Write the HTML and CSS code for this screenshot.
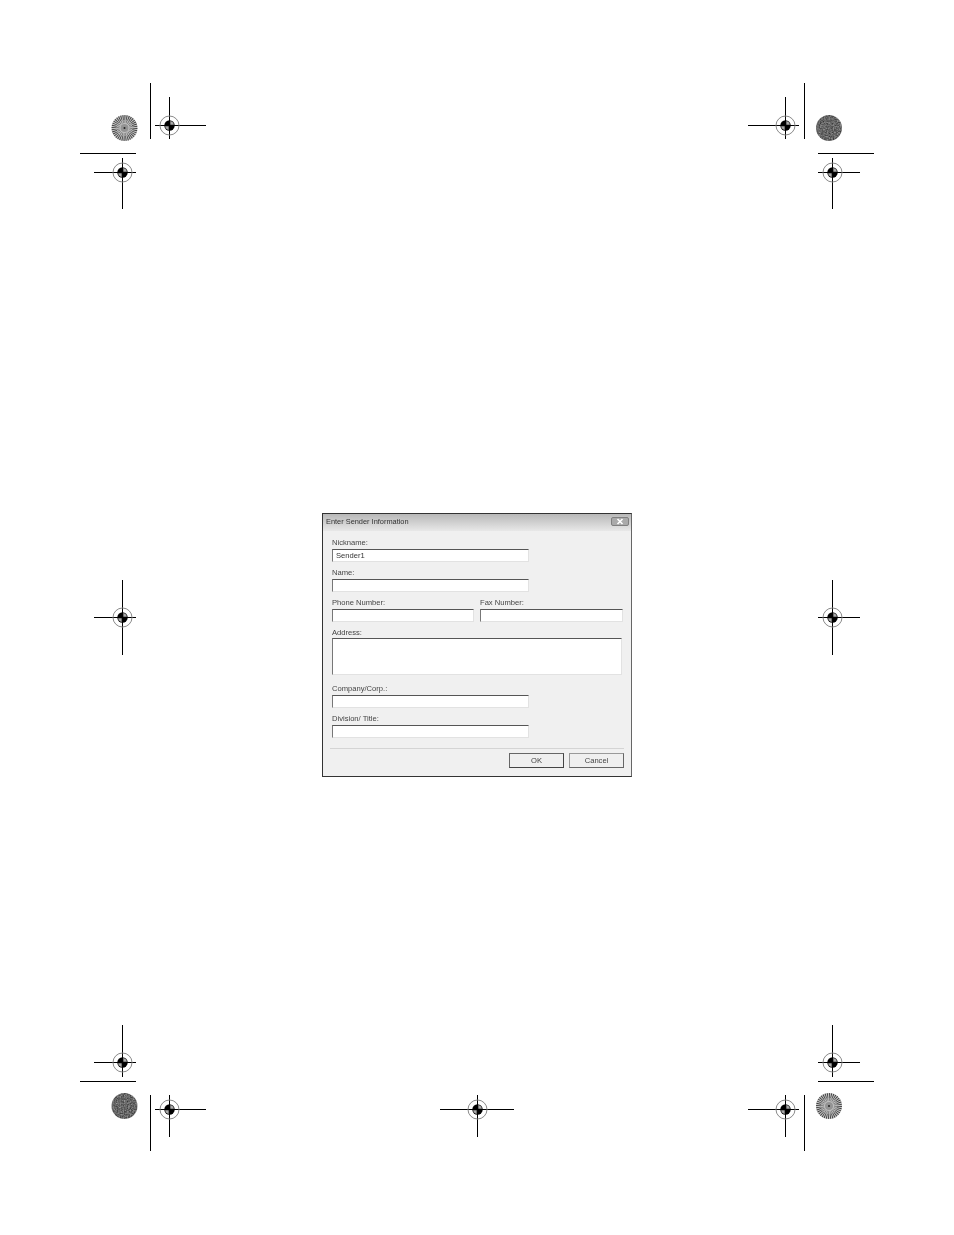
FILE: index.html
```html
<!DOCTYPE html>
<html lang="en">
<head>
    <meta charset="UTF-8">
    <title>Enter Sender Information</title>
    <link rel="stylesheet" href="styles.css">
</head>
<body>
    <!-- printer's marks around the page -->
    <svg class="marks" width="954" height="1235" viewBox="0 0 954 1235">
        <defs>
            <filter id="noise" color-interpolation-filters="sRGB">
                <feTurbulence type="fractalNoise" baseFrequency="0.7" numOctaves="2" seed="4"/>
                <feColorMatrix values="0.6 0 0 0 0.1  0.6 0 0 0 0.1  0.6 0 0 0 0.1  0 0 0 0 1"/>
                <feComposite in2="SourceAlpha" operator="in"/>
            </filter>
            <g id="reg">
                <circle r="9.5" fill="none" stroke="#8a8a8a" stroke-width="1"/>
                <circle r="5.2" fill="#000"/>
                <path d="M0.8 -0.8V-4.4A4.4 4.4 0 0 1 4.4 -0.8Z" fill="#aaa"/>
                <path d="M-0.8 0.8V4.4A4.4 4.4 0 0 1 -4.4 0.8Z" fill="#aaa"/>
            </g>
            <g id="star">
                <circle r="13" fill="#c4c4c4"/>
                <circle r="10.4" fill="none" stroke="#3a3a3a" stroke-width="5" pathLength="72" stroke-dasharray="0.9 1.1"/>
                <circle r="6.4" fill="none" stroke="#777" stroke-width="3" pathLength="48" stroke-dasharray="1 1"/>
                <circle r="4" fill="#939393"/>
                <circle r="1" fill="#222"/>
            </g>
            <circle id="grain" r="13" fill="#666" filter="url(#noise)"/>
        </defs>

        <path class="rule" d="M150.5 83V139M80 153.5H136M804.5 83V139M818 153.5H874
            M80 1081.5H136M150.5 1095V1151M818 1081.5H874M804.5 1095V1151
            M155 125.5H206M169.5 97V139M94 172.5H136M122.5 158V209
            M748 125.5H799M785.5 97V139M818 172.5H860M832.5 158V209
            M94 617.5H136M122.5 580V655M818 617.5H860M832.5 580V655
            M94 1062.5H136M122.5 1025V1077M155 1109.5H206M169.5 1095V1137
            M440 1109.5H514M477.5 1095V1137
            M818 1062.5H860M832.5 1025V1077M748 1109.5H799M785.5 1095V1137"/>

        <use href="#reg" x="169.5" y="125.5"/>
        <use href="#reg" x="122.5" y="172.5"/>
        <use href="#reg" x="785.5" y="125.5"/>
        <use href="#reg" x="832.5" y="172.5"/>
        <use href="#reg" x="122.5" y="617.5"/>
        <use href="#reg" x="832.5" y="617.5"/>
        <use href="#reg" x="122.5" y="1062.5"/>
        <use href="#reg" x="169.5" y="1109.5"/>
        <use href="#reg" x="477.5" y="1109.5"/>
        <use href="#reg" x="832.5" y="1062.5"/>
        <use href="#reg" x="785.5" y="1109.5"/>

        <use href="#star" x="124.5" y="128"/>
        <use href="#grain" x="829" y="128"/>
        <use href="#grain" x="124.5" y="1106"/>
        <use href="#star" x="829" y="1106"/>
    </svg>

    <div class="page">
        <div class="dialog">
            <div class="title-bar">
                <span class="title">Enter Sender Information</span>
                <button type="button" class="close-btn">
                    <svg width="18" height="9" viewBox="0 0 18 9"><path d="M6.5 2L11.5 7M11.5 2L6.5 7" stroke="#fff" stroke-width="1.6"/></svg>
                </button>
            </div>

            <form class="form-body">
                <div class="field short">
                    <label for="nickname">Nickname:</label>
                    <input type="text" id="nickname" value="Sender1">
                </div>
                <div class="field short">
                    <label for="name">Name:</label>
                    <input type="text" id="name">
                </div>
                <div class="field-row">
                    <div class="field">
                        <label for="phone">Phone Number:</label>
                        <input type="text" id="phone">
                    </div>
                    <div class="field">
                        <label for="fax">Fax Number:</label>
                        <input type="text" id="fax">
                    </div>
                </div>
                <div class="field address">
                    <label for="address">Address:</label>
                    <textarea id="address"></textarea>
                </div>
                <div class="field short">
                    <label for="company">Company/Corp.:</label>
                    <input type="text" id="company">
                </div>
                <div class="field short">
                    <label for="division">Division/ Title:</label>
                    <input type="text" id="division">
                </div>
            </form>

            <div class="dialog-buttons">
                <button type="button" class="btn default">OK</button>
                <button type="button" class="btn">Cancel</button>
            </div>
        </div>
    </div>
</body>
</html>
```

FILE: styles.css
```css
body {
    margin: 0;
    background: #fff;
    font-family: "Liberation Sans", sans-serif;
    color: #444;
}

.marks {
    position: absolute;
    top: 0;
    left: 0;
}

.rule {
    fill: none;
    stroke: #000;
    stroke-width: 1;
    shape-rendering: crispEdges;
}

.page {
    position: relative;
    height: 1235px;
    box-sizing: border-box;
    padding: 513px 0 0 322px;
}

/* the dialog is a soft, scaled-down capture in the original */
.dialog {
    width: 310px;
    height: 264px;
    box-sizing: border-box;
    background: #f0f0f0;
    border: 1px solid #333;
    border-right-color: #666;
    filter: blur(0.3px);
}

.title-bar {
    display: flex;
    justify-content: space-between;
    align-items: center;
    height: 17px;
    padding: 0 2px 2px 3px;
    box-sizing: border-box;
    background: linear-gradient(#b8b8b8, #e8e8e8);
}

.title {
    font-size: 7.4px;
    color: #333;
}

.close-btn {
    display: flex;
    width: 16px;
    height: 7px;
    padding: 0;
    box-sizing: content-box;
    border: 1px solid #808080;
    border-radius: 2px;
    background: #aaa;
    overflow: hidden;
}

.close-btn svg {
    margin: -1px;
}

.form-body {
    padding: 5px 9px 0;
}

.field {
    margin-bottom: 4px;
}

.field label {
    display: block;
    height: 13px;
    font-size: 7.6px;
    line-height: 13px;
}

.field input,
.field textarea {
    display: block;
    width: 100%;
    height: 13px;
    margin: 0;
    padding: 0 3px;
    box-sizing: border-box;
    border: 1px solid #e2e2e2;
    border-top-color: #555;
    border-left-color: #777;
    border-radius: 0;
    background: #fff;
    font-family: inherit;
    font-size: 7.6px;
    color: #333;
    outline: none;
    resize: none;
}

.short {
    width: 197px;
}

.field-row {
    display: grid;
    grid-template-columns: 142px 143px;
    gap: 6px;
}

.address {
    width: 290px;
    margin-bottom: 7px;
}

.address label {
    height: 12px;
}

.field textarea {
    height: 37px;
}

.dialog-buttons {
    display: flex;
    justify-content: flex-end;
    gap: 5px;
    margin: 10px 7px 0;
    padding-top: 4px;
    border-top: 1px solid #d4d4d4;
}

.btn {
    width: 55px;
    height: 15px;
    padding: 0;
    border: 1px solid #999;
    border-right-color: #666;
    border-bottom-color: #666;
    border-radius: 0;
    background: #efefef;
    font-family: inherit;
    font-size: 7.6px;
    color: #444;
}

.btn.default {
    border-color: #666;
    border-right-color: #444;
    border-bottom-color: #444;
}
```
